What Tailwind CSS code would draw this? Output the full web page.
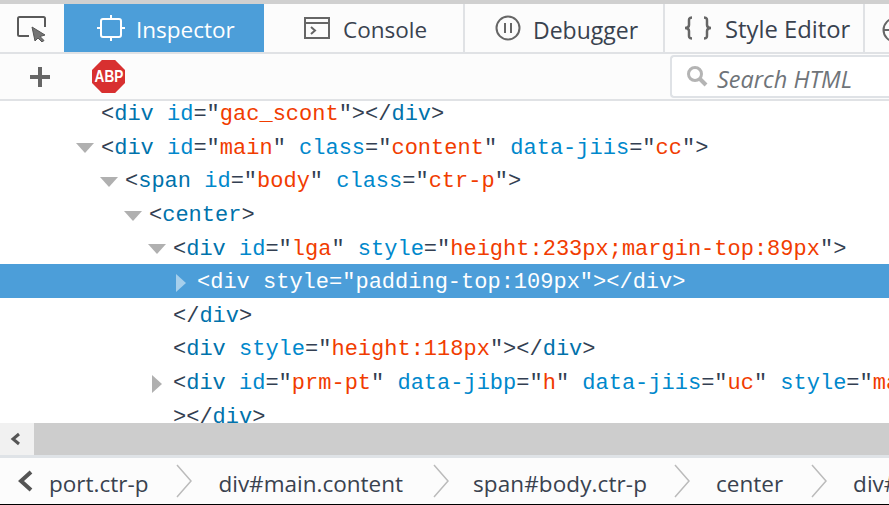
<!DOCTYPE html>
<html lang="en">
<head>
<meta charset="UTF-8">
<title>Inspector</title>
<script src="https://cdn.jsdelivr.net/npm/@tailwindcss/browser@4"></script>
</head>
<body class="w-[889px] h-[505px] overflow-hidden bg-white font-['Open_Sans','Noto_Sans',sans-serif] text-[#39424f]">
  <div class="h-[4px] bg-[#d0d0d0]"></div>

  <!-- Tabs -->
  <div class="flex h-[50px] bg-[#fcfcfc] border-b-2 border-[#e0e2e5]">
    <div class="w-[64px] flex items-center justify-center">
      <svg width="32" height="28" viewBox="0 0 32 28" fill="none">
        <path d="M13 22H3.500a1.500 1.500 0 0 1-1.500-1.500V4.500A1.500 1.500 0 0 1 3.500 3h24A1.500 1.500 0 0 1 29 4.500V13" stroke="#5a5a5a" stroke-width="2"/>
        <path d="M16 13l13 8-5 1.500 4 4-2 1.500-4-4-3 3z" fill="#757575" stroke="#555" stroke-width="1"/>
      </svg>
    </div>
    <div class="w-[200px] bg-[#4c9ed9] text-white flex items-center pl-[32px] gap-[10px] text-[22.500px]">
      <svg width="30" height="30" viewBox="0 0 30 30" fill="none" stroke="#fff" stroke-width="2">
        <rect x="5" y="6" width="20" height="18" rx="2"/>
        <path d="M15 2v4M15 24v4M1 15h4M25 15h4"/>
      </svg>
      <span class="pt-[4px]">Inspector</span>
    </div>
    <div class="w-[201px] flex items-center pl-[40px] gap-[13px] text-[22.500px] border-r-2 border-[#e0e2e5]">
      <svg width="26" height="24" viewBox="0 0 26 24" fill="none">
        <rect x="1" y="2" width="24" height="20" stroke="#666" stroke-width="2"/>
        <path d="M1 7h24" stroke="#666" stroke-width="2"/>
        <path d="M7 11l4 3.500-4 3.500" stroke="#666" stroke-width="2"/>
      </svg>
      <span class="pt-[4px]">Console</span>
    </div>
    <div class="w-[200px] flex items-center pl-[30px] gap-[12px] text-[23px] border-r-2 border-[#e0e2e5]">
      <svg width="26" height="26" viewBox="0 0 26 26" fill="none" stroke="#666" stroke-width="2">
        <circle cx="13" cy="13" r="11.500"/>
        <path d="M10 8v10M16 8v10"/>
      </svg>
      <span class="pt-[4px]">Debugger</span>
    </div>
    <div class="w-[200px] flex items-center pl-[19px] gap-[13px] text-[23.800px] whitespace-nowrap border-r-2 border-[#e0e2e5]">
      <svg width="28" height="24" viewBox="0 0 28 24" fill="none" stroke="#666" stroke-width="2.500">
        <path d="M8 1.500C4.500 1.500 5 3.500 5 6v3c0 2-1 3-4 3 3 0 4 1 4 3v3c0 2.500-.5 4.500 3 4.500"/>
        <path d="M20 1.500c3.500 0 3 2 3 4.500v3c0 2 1 3 4 3-3 0-4 1-4 3v3c0 2.500.5 4.500-3 4.500"/>
      </svg>
      <span class="pt-[4px]">Style Editor</span>
    </div>
    <div class="flex-1 overflow-hidden pl-[17px] pt-[13px]">
      <svg width="26" height="26" viewBox="0 0 26 26" fill="none" stroke="#666" stroke-width="2">
        <circle cx="13" cy="13" r="11.500"/>
        <path d="M2 13h14"/>
      </svg>
    </div>
  </div>

  <!-- Toolbar -->
  <div class="flex items-center h-[47px] bg-[#fcfcfc] border-b-2 border-[#e0e2e5]">
    <div class="w-[80px] pl-[30px]">
      <svg width="20" height="20" viewBox="0 0 20 20"><path d="M8 0h4v8h8v4h-8v8H8v-8H0V8h8z" fill="#666"/></svg>
    </div>
    <div class="w-[33px] h-[33px] ml-[12px] bg-[#d83030] [clip-path:polygon(30%_0,70%_0,100%_30%,100%_70%,70%_100%,30%_100%,0_70%,0_30%)] flex items-center justify-center">
      <span class="font-['Liberation_Sans',sans-serif] font-bold text-white text-[17px] scale-x-[0.8] whitespace-nowrap">ABP</span>
    </div>
    <div class="ml-auto self-end mb-[1px] w-[219px] h-[43px] bg-white border-2 border-r-0 border-[#dfe2e6] rounded-l-[4px] flex items-center pl-[14px] gap-[9px] italic text-[23.500px] text-[#6f7479]">
      <svg width="22" height="24" viewBox="0 0 22 24" fill="none" stroke="#b4b4b4">
        <circle cx="9" cy="9" r="6.500" stroke-width="3"/>
        <path d="M14 14l6 6" stroke-width="4"/>
      </svg>
      <span class="pt-[6px]">Search HTML</span>
    </div>
  </div>

  <!-- Markup tree -->
  <div class="h-[322px] overflow-hidden bg-white font-['Liberation_Mono',monospace] text-[22px] text-[#333f52] whitespace-nowrap">
    <div class="-mt-[5px]">
      <div class="flex items-center h-[33.600px] pt-[4px] pl-[101px]"><span>&lt;<span class="text-[#0072ab]">div</span> <span class="text-[#0088cc]">id</span>="<span class="text-[#f13c00]">gac_scont</span>"&gt;&lt;/<span class="text-[#0072ab]">div</span>&gt;</span></div>
      <div class="flex items-center h-[33.600px] pt-[4px] pl-[76px]"><span class="w-0 h-0 mr-[7px] border-x-[9px] border-x-transparent border-t-[10px] border-t-[#b0b0b0]"></span><span>&lt;<span class="text-[#0072ab]">div</span> <span class="text-[#0088cc]">id</span>="<span class="text-[#f13c00]">main</span>" <span class="text-[#0088cc]">class</span>="<span class="text-[#f13c00]">content</span>" <span class="text-[#0088cc]">data-jiis</span>="<span class="text-[#f13c00]">cc</span>"&gt;</span></div>
      <div class="flex items-center h-[33.600px] pt-[4px] pl-[100px]"><span class="w-0 h-0 mr-[7px] border-x-[9px] border-x-transparent border-t-[10px] border-t-[#b0b0b0]"></span><span>&lt;<span class="text-[#0072ab]">span</span> <span class="text-[#0088cc]">id</span>="<span class="text-[#f13c00]">body</span>" <span class="text-[#0088cc]">class</span>="<span class="text-[#f13c00]">ctr-p</span>"&gt;</span></div>
      <div class="flex items-center h-[33.600px] pt-[4px] pl-[124px]"><span class="w-0 h-0 mr-[7px] border-x-[9px] border-x-transparent border-t-[10px] border-t-[#b0b0b0]"></span><span>&lt;<span class="text-[#0072ab]">center</span>&gt;</span></div>
      <div class="flex items-center h-[33.600px] pt-[4px] pl-[148px]"><span class="w-0 h-0 mr-[7px] border-x-[9px] border-x-transparent border-t-[10px] border-t-[#b0b0b0]"></span><span>&lt;<span class="text-[#0072ab]">div</span> <span class="text-[#0088cc]">id</span>="<span class="text-[#f13c00]">lga</span>" <span class="text-[#0088cc]">style</span>="<span class="text-[#f13c00]">height:233px;margin-top:89px</span>"&gt;</span></div>
      <div class="flex items-center h-[33.600px] pt-[4px] pl-[176px] bg-[#4c9ed9] text-white"><span class="w-0 h-0 mr-[11px] border-y-[9px] border-y-transparent border-l-[10px] border-l-[#a6cfec]"></span><span>&lt;div style="padding-top:109px"&gt;&lt;/div&gt;</span></div>
      <div class="flex items-center h-[33.600px] pt-[4px] pl-[173px]"><span>&lt;/<span class="text-[#0072ab]">div</span>&gt;</span></div>
      <div class="flex items-center h-[33.600px] pt-[4px] pl-[173px]"><span>&lt;<span class="text-[#0072ab]">div</span> <span class="text-[#0088cc]">style</span>="<span class="text-[#f13c00]">height:118px</span>"&gt;&lt;/<span class="text-[#0072ab]">div</span>&gt;</span></div>
      <div class="flex items-center h-[33.600px] pt-[4px] pl-[152px]"><span class="w-0 h-0 mr-[11px] border-y-[9px] border-y-transparent border-l-[10px] border-l-[#b0b0b0]"></span><span>&lt;<span class="text-[#0072ab]">div</span> <span class="text-[#0088cc]">id</span>="<span class="text-[#f13c00]">prm-pt</span>" <span class="text-[#0088cc]">data-jibp</span>="<span class="text-[#f13c00]">h</span>" <span class="text-[#0088cc]">data-jiis</span>="<span class="text-[#f13c00]">uc</span>" <span class="text-[#0088cc]">style</span>="<span class="text-[#f13c00]">ma</span></span></div>
      <div class="flex items-center h-[33.600px] pt-[4px] pl-[173px]"><span>&gt;&lt;/<span class="text-[#0072ab]">div</span>&gt;</span></div>
    </div>
  </div>

  <!-- Horizontal scrollbar -->
  <div class="flex h-[32px] bg-[#cdcdcd]">
    <div class="w-[34px] bg-[#f1f1f1] flex items-center justify-center pr-[2px]">
      <svg width="12" height="14" viewBox="0 0 12 14" fill="none"><path d="M9 2L3 7l6 5" stroke="#555" stroke-width="3"/></svg>
    </div>
  </div>

  <!-- Breadcrumbs -->
  <div class="flex items-center h-[50px] bg-[#fcfcfc] border-t-[3px] border-[#dfe3e7] border-b-[1px] border-b-black text-[22.500px] whitespace-nowrap overflow-hidden">
    <svg class="ml-[17px] shrink-0" width="18" height="24" viewBox="0 0 18 24" fill="none"><path d="M14 3L4 12l10 9" stroke="#555" stroke-width="4"/></svg>
    <span class="ml-[14px] pt-[6px]">port.ctr-p</span>
    <svg class="ml-[28px] shrink-0" width="16" height="34" viewBox="0 0 16 34" fill="none"><path d="M1 1l14 16L1 33" stroke="#bbb" stroke-width="1.500"/></svg>
    <span class="ml-[26px] pt-[6px]">div#main.content</span>
    <svg class="ml-[30px] shrink-0" width="16" height="34" viewBox="0 0 16 34" fill="none"><path d="M1 1l14 16L1 33" stroke="#bbb" stroke-width="1.500"/></svg>
    <span class="ml-[24px] pt-[6px] tracking-[0.1px]">span#body.ctr-p</span>
    <svg class="ml-[27px] shrink-0" width="16" height="34" viewBox="0 0 16 34" fill="none"><path d="M1 1l14 16L1 33" stroke="#bbb" stroke-width="1.500"/></svg>
    <span class="ml-[26px] pt-[6px]">center</span>
    <svg class="ml-[28px] shrink-0" width="16" height="34" viewBox="0 0 16 34" fill="none"><path d="M1 1l14 16L1 33" stroke="#bbb" stroke-width="1.500"/></svg>
    <span class="ml-[26px] pt-[6px]">div#lga</span>
  </div>
</body>
</html>
